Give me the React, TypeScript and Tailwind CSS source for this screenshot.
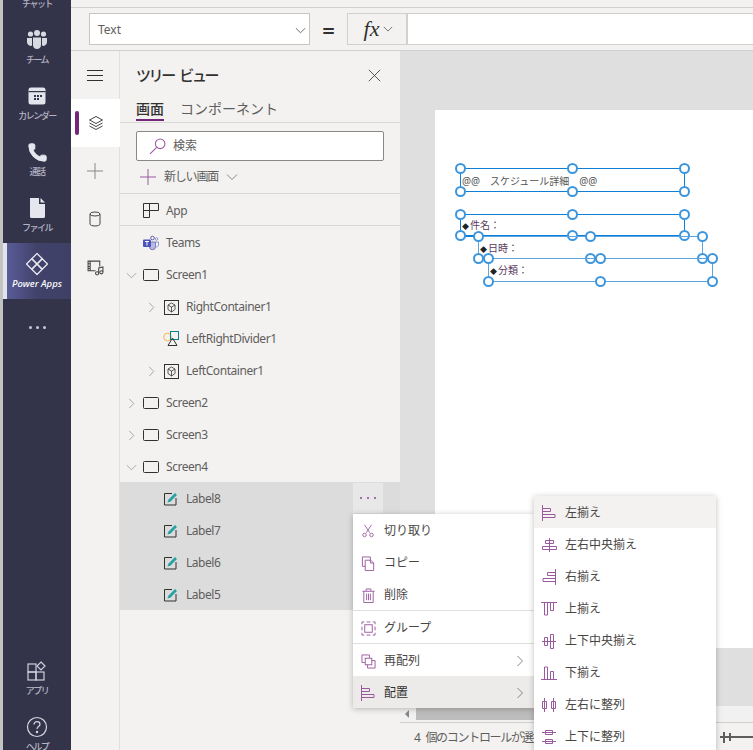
import React from "react";
import { Phone } from "lucide-react";

const PURPLE = "#9a5a9e";

const Glyph: React.FC<{ size?: number; color?: string; width?: number; children: React.ReactNode }> = ({ size = 16, color = PURPLE, width = 1, children }) => (
  <svg width={size} height={size} viewBox="0 0 16 16" fill="none" stroke={color} strokeWidth={width} className="shrink-0">
    {children}
  </svg>
);

const ChevDown = ({ size = 12, color = "#8a8886" }: { size?: number; color?: string }) => (
  <svg width={size} height={size} viewBox="0 0 12 12" fill="none" stroke={color} className="shrink-0"><path d="M1 3.5l5 5 5-5" /></svg>
);
const ChevRight = ({ size = 12, color = "#8a8886" }: { size?: number; color?: string }) => (
  <svg width={size} height={size} viewBox="0 0 12 12" fill="none" stroke={color} className="shrink-0"><path d="M3.5 1l5 5-5 5" /></svg>
);

const RailItem: React.FC<{ label: string; icon: React.ReactNode }> = ({ label, icon }) => (
  <div className="h-[56px] flex flex-col items-center justify-center pb-[1px] text-[#b3b3c3]">
    <div className="h-[26px] flex items-center justify-center">{icon}</div>
    <span className="text-[9px] leading-[13px] font-medium tracking-[-1.5px]">{label}</span>
  </div>
);

const TeamsIcon = () => (
  <svg width="22" height="22" viewBox="0 0 22 22" fill="#d9d9e2">
    <circle cx="4.5" cy="5" r="2.6" /><circle cx="11" cy="4" r="3" /><circle cx="17.5" cy="5" r="2.6" />
    <path d="M1 9h5v7.5L4.5 17C2.5 16.5 1 15 1 13z" />
    <path d="M16 9h5v4c0 2-1.5 3.500-3.500 4L16 16.500z" />
    <path d="M7 8.500h8V16c0 2.500-1.800 4-4 4s-4-1.500-4-4z" />
  </svg>
);
const CalendarIcon = () => (
  <svg width="20" height="20" viewBox="0 0 20 20">
    <rect x="1.500" y="1.500" width="17" height="17" rx="2.500" fill="#e4e4ec" />
    <rect x="1.500" y="5" width="17" height="1.200" fill="#33344a" />
    <g fill="#33344a">
      <rect x="7" y="9" width="2" height="2" /><rect x="10" y="9" width="2" height="2" /><rect x="13" y="9" width="2" height="2" />
      <rect x="7" y="12" width="2" height="2" /><rect x="10" y="12" width="2" height="2" />
    </g>
  </svg>
);
const FileIcon = () => (
  <svg width="22" height="22" viewBox="0 0 22 22" fill="#e6e6ee">
    <path d="M4 1h9v6h6v12.500a1.500 1.500 0 01-1.500 1.500h-12A1.500 1.500 0 014 19.500z" />
    <path d="M14.500 1l4.500 4.500h-4.500z" />
  </svg>
);
const PowerAppsIcon = () => (
  <svg width="24" height="24" viewBox="0 0 24 24" fill="none" stroke="#e6e6ee" strokeWidth="1.300" strokeLinejoin="round">
    <path d="M12 1.500l5.300 5.300L12 12 6.800 6.800z" />
    <path d="M6.800 6.800L12 12l-5.200 5.200L1.500 12z" />
    <path d="M17.200 6.800L22.500 12l-5.300 5.200L12 12z" />
    <path d="M12 12l5.200 5.200L12 22.500l-5.200-5.300z" />
  </svg>
);
const AppsIcon = () => (
  <svg width="20" height="20" viewBox="0 0 20 20" fill="none" stroke="#cfcfda" strokeWidth="1.200">
    <rect x="1" y="3" width="8" height="8" /><rect x="1" y="11" width="8" height="8" /><rect x="9" y="11" width="8" height="8" />
    <path d="M14 1l4 4-4 4-4-4z" fill="#33344a" />
  </svg>
);
const HelpIcon = () => (
  <svg width="22" height="22" viewBox="0 0 22 22" fill="none" stroke="#d6d6e0" strokeWidth="1.200">
    <circle cx="11" cy="11" r="9.500" />
    <path d="M8 8.500c0-1.700 1.300-2.800 3-2.800s3 1.100 3 2.600c0 2.300-3 2.200-3 4.700" />
    <circle cx="11" cy="16" r=".6" fill="#d6d6e0" />
  </svg>
);

const ScreenIcon = () => (
  <svg width="16" height="12" viewBox="0 0 16 12" fill="none" stroke="#323130" className="shrink-0"><rect x=".5" y=".5" width="15" height="11" rx="1" /></svg>
);
const ContainerIcon = () => (
  <svg width="15" height="15" viewBox="0 0 15 15" fill="none" stroke="#323130" className="shrink-0">
    <rect x=".5" y=".5" width="14" height="14" />
    <path d="M7.500 3l3.500 2v4.500L7.500 12 4 9.500V5zM4 5l3.500 2L11 5M7.500 7v5" strokeWidth=".8" />
  </svg>
);
const AppIcon = () => (
  <svg width="16" height="15" viewBox="0 0 16 15" fill="none" stroke="#323130" className="shrink-0">
    <path d="M.5 .5h15v7H6.500v7H.5zM.5 7.500h6M6.500 .5v7" />
  </svg>
);
const TeamsLogo = () => (
  <svg width="16" height="16" viewBox="0 0 16 16" className="shrink-0">
    <circle cx="9.500" cy="3" r="1.800" fill="none" stroke="#6264a7" strokeWidth="1" />
    <circle cx="13.500" cy="4" r="1.300" fill="none" stroke="#7b83c4" strokeWidth=".8" />
    <path d="M6 7h6.500v4.500a3 3 0 01-6 .5z" fill="#b7b9e0" stroke="#6264a7" strokeWidth=".8" />
    <path d="M12.500 7H15.500v3a2 2 0 01-3 1.700z" fill="none" stroke="#7b83c4" strokeWidth=".8" />
    <rect x="0" y="4.500" width="8" height="7.500" rx="1" fill="#4b53bc" />
    <path d="M2 6.500h4M4 6.500V10.500" stroke="#fff" strokeWidth="1" />
  </svg>
);
const DividerIcon = () => (
  <svg width="17" height="16" viewBox="0 0 17 16" fill="none" className="shrink-0">
    <circle cx="4.500" cy="6" r="3.800" stroke="#f2b84b" />
    <rect x="7.500" y=".5" width="8" height="8" stroke="#038387" />
    <path d="M9.500 7l4.500 7.500H5z" stroke="#323130" />
  </svg>
);
const LabelIcon = () => (
  <svg width="14" height="14" viewBox="0 0 14 14" fill="none" className="shrink-0">
    <path d="M8 1.500H.5v11.500H12V6" stroke="#323130" />
    <path d="M3.500 10.500l.8-2.800L11 1l2 2-6.700 6.700z" fill="#2aa0a4" />
  </svg>
);

type RowProps = { level?: 0 | 1; chevron?: "down" | "right"; icon: React.ReactNode; label: string; border?: boolean; selected?: boolean };

const TreeRow: React.FC<RowProps> = ({ level = 0, chevron, icon, label, border, selected }) => (
  <div className={`h-[32px] flex items-center pt-[2px] text-[12px] tracking-[-0.45px] text-[#605e5c] ${level === 1 ? "pl-[20px]" : ""} ${border ? "border-b border-[#d9d7d5]" : ""} ${selected ? "bg-[#dcdcdc]" : ""}`}>
    <div className="w-[22px] flex justify-center">
      {chevron === "down" && <ChevDown size={11} color="#a19f9d" />}
      {chevron === "right" && <ChevRight size={11} color="#a19f9d" />}
    </div>
    <div className="w-[16px] ml-[1px] flex justify-center">{icon}</div>
    <span className="ml-[7px]">{label}</span>
  </div>
);

const MenuRow: React.FC<{ icon: React.ReactNode; label: string; arrow?: boolean; className?: string; text?: string }> = ({ icon, label, arrow, className = "", text = "text-[#484644]" }) => (
  <div className={`h-[32px] flex items-center pt-[2px] pl-[7px] pr-[8px] text-[12px] ${text} ${className}`}>
    <div className="w-[16px] flex justify-center">{icon}</div>
    <span className="ml-[8px] flex-1">{label}</span>
    {arrow && <ChevRight size={12} color="#8a8886" />}
  </div>
);

const Handle: React.FC<{ className: string }> = ({ className }) => (
  <span className={`absolute size-[11px] rounded-full border-2 border-[#3d96dd] bg-white ${className}`} />
);

const SelBox: React.FC<{ className: string; children: React.ReactNode; strong?: boolean }> = ({ className, children, strong }) => (
  <div className={`absolute border-[1.5px] text-[10px] text-[#555] whitespace-pre ${strong ? "border-[#0f7ed6]" : "border-[#5aa5e2]"} ${className}`}>
    <span className="pl-[1px]">{children}</span>
    <Handle className="-left-[6px] -top-[6px]" />
    <Handle className="left-[calc(50%-6px)] -top-[6px]" />
    <Handle className="-right-[6px] -top-[6px]" />
    <Handle className="-left-[6px] -bottom-[6px]" />
    <Handle className="left-[calc(50%-6px)] -bottom-[6px]" />
    <Handle className="-right-[6px] -bottom-[6px]" />
  </div>
);

const Field = ({ label }: { label: string }) => (
  <>
    <span className="text-[7px] text-[#222]">◆</span>
    <span className="ml-[1px] text-[#5c3a5e]">{label}</span>
  </>
);

export default function App() {
  return (
    <div className="relative w-[753px] h-[750px] overflow-hidden flex bg-[#f3f2f1] font-['Noto_Sans','Noto_Sans_CJK_JP',sans-serif]">
      <div className="w-[3px] bg-[#c3c3c3] shrink-0" />

      {/* teams rail */}
      <div className="w-[68px] shrink-0 bg-[#33344a] flex flex-col justify-between overflow-hidden">
        <div className="-mt-[37px]">
          <RailItem label="チャット" icon={<span />} />
          <RailItem label="チーム" icon={<TeamsIcon />} />
          <RailItem label="カレンダー" icon={<CalendarIcon />} />
          <RailItem label="通話" icon={<Phone size={21} fill="#e6e6ee" stroke="#e6e6ee" strokeWidth={1} />} />
          <RailItem label="ファイル" icon={<FileIcon />} />
          <div className="h-[56px] flex bg-gradient-to-r from-[#5d5f9e] via-[#41426a] to-[#3f4066]">
            <div className="w-[4px] bg-[#e3e3ec]" />
            <div className="flex-1 flex flex-col items-center justify-center pr-[4px] pb-[2px]">
              <div className="h-[26px] flex items-center"><PowerAppsIcon /></div>
              <span className="text-[9.500px] leading-[13px] italic font-medium text-white">Power Apps</span>
            </div>
          </div>
          <div className="h-[56px] flex items-center justify-center gap-[4px]">
            <span className="size-[3px] rounded-full bg-[#c8c8d4]" />
            <span className="size-[3px] rounded-full bg-[#c8c8d4]" />
            <span className="size-[3px] rounded-full bg-[#c8c8d4]" />
          </div>
        </div>
        <div className="-mb-[12px]">
          <RailItem label="アプリ" icon={<AppsIcon />} />
          <RailItem label="ヘルプ" icon={<HelpIcon />} />
        </div>
      </div>

      <div className="flex-1 min-w-0 flex flex-col">
        {/* formula bar */}
        <div className="h-[8px] border-b border-[#d2d0ce] shrink-0" />
        <div className="h-[43px] shrink-0 flex items-center border-b border-[#d2d0ce] pl-[18px]">
          <div className="w-[221px] h-[32px] bg-white border border-[#c8c6c4] flex items-center justify-between pt-[2px] pl-[8px] pr-[3px] text-[12px] text-[#605e5c]">
            <span>Text</span>
            <ChevDown size={11} color="#605e5c" />
          </div>
          <div className="w-[37px] text-center text-[22px] leading-none font-semibold text-[#323130] mt-[2px]">=</div>
          <div className="w-[60px] h-[32px] border border-[#d2d0ce] flex items-center justify-center gap-[4px] pl-[3px]">
            <span className="font-['Liberation_Serif',serif] italic text-[22px] leading-none text-[#323130]">fx</span>
            <ChevDown size={10} color="#605e5c" />
          </div>
          <div className="flex-1 h-[32px] bg-white border-y border-l border-[#d2d0ce]" />
        </div>

        <div className="flex-1 min-h-0 flex">
          {/* tool rail */}
          <div className="w-[49px] shrink-0 border-r border-[#e1dfdd] flex flex-col">
            <div className="h-[48px] flex items-center justify-center">
              <Glyph size={16} color="#323130"><path d="M0 3.500h16M0 8.500h16M0 13.500h16" /></Glyph>
            </div>
            <div className="relative h-[48px] -mr-[1px] bg-white flex items-center justify-center">
              <span className="absolute left-[4px] top-[12px] w-[4px] h-[24px] rounded-sm bg-[#742774]" />
              <Glyph size={16} color="#484644">
                <path d="M8 1.500l6.500 3.500L8 8.500 1.500 5z" />
                <path d="M1.500 8L8 11.500 14.500 8M1.500 11L8 14.500 14.500 11" />
              </Glyph>
            </div>
            <div className="h-[48px] flex items-center justify-center">
              <Glyph size={16} color="#8a8886"><path d="M8 0v16M0 8h16" /></Glyph>
            </div>
            <div className="h-[48px] flex items-center justify-center">
              <Glyph size={16} color="#484644">
                <ellipse cx="8" cy="3" rx="5" ry="2" />
                <path d="M3 3v10c0 1.100 2.200 2 5 2s5-.9 5-2V3" />
              </Glyph>
            </div>
            <div className="h-[48px] flex items-center justify-center">
              <Glyph size={17} color="#484644">
                <path d="M12 7V2H1v9h7M3 2v9M1 4.500h2M1 7h2M1 9h2M11 13V8.500l4-1V12" />
                <circle cx="9.500" cy="13.500" r="1.500" /><circle cx="13.500" cy="12.500" r="1.500" />
              </Glyph>
            </div>
          </div>

          {/* tree view */}
          <div className="w-[280px] shrink-0 flex flex-col">
            <div className="h-[48px] flex items-center justify-between pl-[16px] pr-[19px]">
              <span className="text-[15px] font-medium tracking-[-2.4px] [word-spacing:4px] text-[#323130]">ツリー ビュー</span>
              <Glyph size={13} color="#323130"><path d="M1 1l14 14M15 1L1 15" /></Glyph>
            </div>
            <div className="h-[24px] border-b border-[#d9d7d5] flex gap-[16px] pl-[16px] text-[14px] leading-[20px] text-[#605e5c]">
              <div className="h-[22px] border-b-2 border-[#742774] font-medium text-[#323130]">画面</div>
              <div>コンポーネント</div>
            </div>
            <div className="mx-[16px] mt-[8px] h-[30px] bg-white border border-[#8a8886] rounded-[2px] flex items-center pl-[12px] text-[12px] text-[#605e5c]">
              <Glyph size={17}><circle cx="10.500" cy="5.500" r="4.500" /><path d="M7.200 8.800L1 15" /></Glyph>
              <span className="ml-[7px]">検索</span>
            </div>
            <div className="h-[33px] border-b border-[#d9d7d5] flex items-center pl-[20px] text-[12px] text-[#605e5c]">
              <Glyph size={16}><path d="M8 0v16M0 8h16" /></Glyph>
              <span className="ml-[8px] tracking-[-1.2px]">新しい画面</span>
              <span className="ml-[8px]"><ChevDown size={12} color="#8a8886" /></span>
            </div>
            <TreeRow icon={<AppIcon />} label="App" border />
            <TreeRow icon={<TeamsLogo />} label="Teams" />
            <TreeRow chevron="down" icon={<ScreenIcon />} label="Screen1" />
            <TreeRow level={1} chevron="right" icon={<ContainerIcon />} label="RightContainer1" />
            <TreeRow level={1} icon={<DividerIcon />} label="LeftRightDivider1" />
            <TreeRow level={1} chevron="right" icon={<ContainerIcon />} label="LeftContainer1" />
            <TreeRow chevron="right" icon={<ScreenIcon />} label="Screen2" />
            <TreeRow chevron="right" icon={<ScreenIcon />} label="Screen3" />
            <TreeRow chevron="down" icon={<ScreenIcon />} label="Screen4" />
            <div className="relative">
              <TreeRow level={1} icon={<LabelIcon />} label="Label8" selected />
              <TreeRow level={1} icon={<LabelIcon />} label="Label7" selected />
              <TreeRow level={1} icon={<LabelIcon />} label="Label6" selected />
              <TreeRow level={1} icon={<LabelIcon />} label="Label5" selected />
              <div className="absolute left-[233px] top-[1px] w-[30px] h-[30px] bg-[#e8e8e8] flex items-center justify-center gap-[5px]">
                <span className="size-[2px] bg-[#a86bab]" />
                <span className="size-[2px] bg-[#a86bab]" />
                <span className="size-[2px] bg-[#a86bab]" />
              </div>
            </div>
          </div>

          {/* canvas */}
          <div className="flex-1 min-w-0 flex flex-col bg-[#dfdfdf]">
            <div className="flex-1 min-h-0 pl-[35px] pt-[59px] pb-[58px] flex">
              <div className="relative flex-1 bg-white">
                <SelBox strong className="left-[25px] top-[58px] w-[225px] h-[24px] leading-[24px]">{"@@　スケジュール詳細　@@"}</SelBox>
                <SelBox strong className="left-[25px] top-[104px] w-[225px] h-[23px] leading-[20px] border-b-2"><Field label="件名：" /></SelBox>
                <SelBox className="left-[43px] top-[126px] w-[225px] h-[23px] leading-[22px]"><Field label="日時：" /></SelBox>
                <SelBox className="left-[53px] top-[148px] w-[225px] h-[24px] leading-[22px]"><Field label="分類：" /></SelBox>
              </div>
            </div>
            <div className="h-[16px] shrink-0 bg-[#f1f1f1] flex items-center pl-[5px]">
              <span className="w-0 h-0 border-y-[4px] border-y-transparent border-r-[4px] border-r-[#8a8886]" />
              <span className="ml-[7px] w-[200px] h-[12px] bg-[#bdbdbd]" />
            </div>
            <div className="h-[28px] shrink-0 border-t border-[#d2d0ce] bg-[#f3f2f1] flex items-center pl-[14px] pt-[2px] text-[12px] text-[#605e5c] relative">
              <span className="whitespace-nowrap tracking-[-1.3px] [word-spacing:4px]">4 個のコントロールが選択さ</span>
              <div className="absolute left-[320px] top-[13px] w-[33px] h-[2px] bg-[#605e5c]" />
              <div className="absolute left-[323px] top-[9px] w-[2px] h-[11px] bg-[#605e5c]" />
              <div className="absolute left-[329px] top-[10px] w-[2px] h-[8px] bg-[#605e5c]" />
            </div>
          </div>
        </div>
      </div>

      {/* context menu */}
      <div className="absolute left-[353px] top-[514px] w-[181px] bg-white shadow-[0_1px_6px_rgba(0,0,0,0.25)]">
        <MenuRow label="切り取り" icon={<Glyph size={14}><path d="M4 1l6 9M12 1L6 10" /><circle cx="4" cy="12.500" r="2" /><circle cx="12" cy="12.500" r="2" /></Glyph>} />
        <MenuRow label="コピー" icon={<Glyph size={15}><path d="M4.500 4.500h6l3 3v8h-9z" /><path d="M10 4.500V1H1.500v10h3M10 4.500v3h3.500" /></Glyph>} />
        <MenuRow label="削除" icon={<Glyph size={15}><path d="M1.500 3.500h13M3 3.500v12h10v-12M5.500 3V1h5v2M6 6v7M8 6v7M10 6v7" /></Glyph>} />
        <div className="border-t border-[#e1dfdd]">
          <MenuRow label="グループ" icon={<Glyph size={15}><rect x="4" y="4" width="8" height="8" /><path d="M1 3.500V1h2.500M12.500 1H15v2.500M15 12.500V15h-2.500M3.500 15H1v-2.500M1 6v4M15 6v4M6 1h4M6 15h4" /></Glyph>} />
        </div>
        <div className="border-t border-[#e1dfdd]">
          <MenuRow label="再配列" arrow icon={<Glyph size={15}><path d="M1 1h8v3M1 1v8h3" /><rect x="4.500" y="4.500" width="7" height="7" /><path d="M11.500 7H15v8H7v-3.500" /></Glyph>} />
          <MenuRow label="配置" arrow className="bg-[#edebe9]" text="text-[#323130]" icon={<Glyph size={16}><path d="M1.500 0v16M1.500 3.500h8v3h-8M1.500 9.500h12.500v3H1.500" /></Glyph>} />
        </div>
      </div>

      {/* align submenu */}
      <div className="absolute left-[534px] top-[496px] w-[182px] bg-white shadow-[0_1px_6px_rgba(0,0,0,0.25)]">
        <MenuRow label="左揃え" className="bg-[#f3f2f1]" icon={<Glyph size={16}><path d="M1.500 0v16M1.500 3.500h8v3h-8M1.500 9.500h12.500v3H1.500" /></Glyph>} />
        <MenuRow label="左右中央揃え" icon={<Glyph size={16}><path d="M8.500 1v14M4.500 3.500h8v3h-8zM1.500 9.500h14v3h-14z" /></Glyph>} />
        <MenuRow label="右揃え" icon={<Glyph size={16}><path d="M14.500 0v16M14.500 3.500h-8v3h8M14.500 9.500H2v3h12.500" /></Glyph>} />
        <MenuRow label="上揃え" icon={<Glyph size={16}><path d="M0 1.500h16M3.500 1.500V14h3V1.500M9.500 1.500v8h3v-8" /></Glyph>} />
        <MenuRow label="上下中央揃え" icon={<Glyph size={16}><path d="M1 8.500h14M3.500 4.500h3v8h-3zM9.500 1.500h3v14h-3z" /></Glyph>} />
        <MenuRow label="下揃え" icon={<Glyph size={16}><path d="M0 14.500h16M3.500 14.500V2h3v12.500M9.500 14.500v-8h3v8" /></Glyph>} />
        <MenuRow label="左右に整列" icon={<Glyph size={16}><path d="M3.500 1v14M12.500 1v14M1.500 4.500h4v7h-4zM10.500 4.500h4v7h-4z" /></Glyph>} />
        <MenuRow label="上下に整列" icon={<Glyph size={16}><path d="M1 3.500h14M1 12.500h14M4.500 1.500h7v4h-7zM4.500 10.500h7v4h-7z" /></Glyph>} />
      </div>
    </div>
  );
}
